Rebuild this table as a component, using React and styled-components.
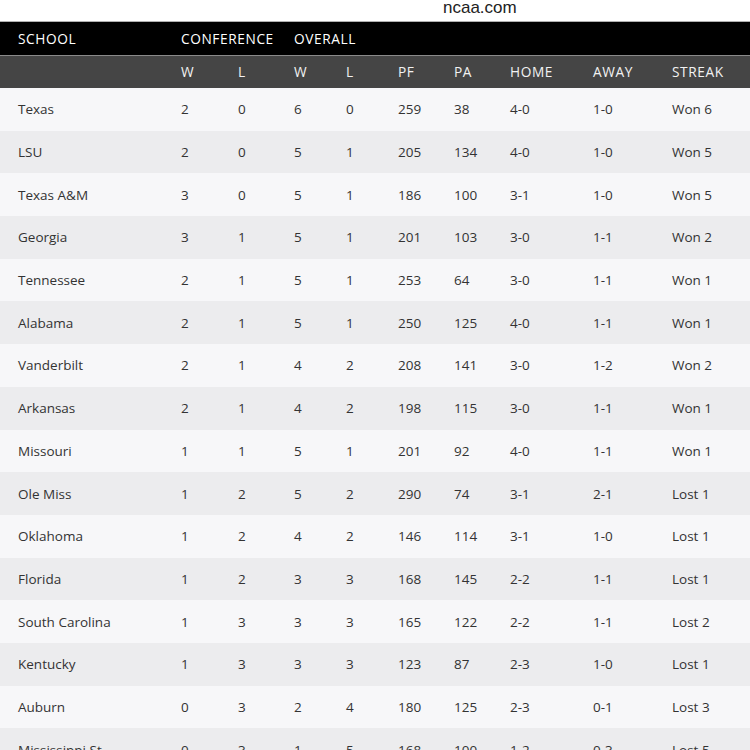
import styled, { createGlobalStyle } from "styled-components";

const GlobalStyle = createGlobalStyle`
  body {
    margin: 0;
    background: #ffffff;
    font-family: "Open Sans", "DejaVu Sans", sans-serif;
  }
`;

const COLS = "181px 57px 56px 52px 52px 56px 56px 83px 79px 1fr";

const Page = styled.div`
  width: 750px;
  height: 750px;
  overflow: hidden;
`;

const Source = styled.div`
  height: 22px;
  box-sizing: border-box;
  padding-left: 443px;
  font-family: "Liberation Sans", Arial, sans-serif;
  font-size: 17px;
  line-height: 16px;
  color: #222;
  border-bottom: 1px solid #b0b0b0;
`;

const HeadRow = styled.div`
  display: grid;
  grid-template-columns: ${COLS};
  align-items: center;
  height: ${p => p.$h}px;
  padding-bottom: 1px;
  background: ${p => p.$bg};
  color: ${p => p.$fg};
  font-size: 13.7px;
  letter-spacing: 0.6px;
  text-transform: uppercase;
  border-bottom: ${p => p.$line ? "1px solid #8a8a8a" : "none"};
  box-sizing: border-box;
`;

const HeadCell = styled.div`
  padding-left: ${p => p.$first ? "18px" : "0"};
  grid-column: ${p => p.$span || "auto"};
  white-space: nowrap;
`;

const Row = styled.div`
  display: grid;
  grid-template-columns: ${COLS};
  align-items: center;
  height: 42.7px;
  background: ${p => p.$alt ? "#ececee" : "#f7f7f9"};
  color: #333;
  font-size: 13.5px;
`;

const Cell = styled.div`
  padding-left: ${p => p.$first ? "18px" : "0"};
  white-space: nowrap;
`;

const teams = [
  ["Texas", 2, 0, 6, 0, 259, 38, "4-0", "1-0", "Won 6"],
  ["LSU", 2, 0, 5, 1, 205, 134, "4-0", "1-0", "Won 5"],
  ["Texas A&M", 3, 0, 5, 1, 186, 100, "3-1", "1-0", "Won 5"],
  ["Georgia", 3, 1, 5, 1, 201, 103, "3-0", "1-1", "Won 2"],
  ["Tennessee", 2, 1, 5, 1, 253, 64, "3-0", "1-1", "Won 1"],
  ["Alabama", 2, 1, 5, 1, 250, 125, "4-0", "1-1", "Won 1"],
  ["Vanderbilt", 2, 1, 4, 2, 208, 141, "3-0", "1-2", "Won 2"],
  ["Arkansas", 2, 1, 4, 2, 198, 115, "3-0", "1-1", "Won 1"],
  ["Missouri", 1, 1, 5, 1, 201, 92, "4-0", "1-1", "Won 1"],
  ["Ole Miss", 1, 2, 5, 2, 290, 74, "3-1", "2-1", "Lost 1"],
  ["Oklahoma", 1, 2, 4, 2, 146, 114, "3-1", "1-0", "Lost 1"],
  ["Florida", 1, 2, 3, 3, 168, 145, "2-2", "1-1", "Lost 1"],
  ["South Carolina", 1, 3, 3, 3, 165, 122, "2-2", "1-1", "Lost 2"],
  ["Kentucky", 1, 3, 3, 3, 123, 87, "2-3", "1-0", "Lost 1"],
  ["Auburn", 0, 3, 2, 4, 180, 125, "2-3", "0-1", "Lost 3"],
  ["Mississippi St", 0, 3, 1, 5, 168, 100, "1-2", "0-3", "Lost 5"],
];

const sub = ["", "W", "L", "W", "L", "PF", "PA", "Home", "Away", "Streak"];

export default function App() {
  return (
    <Page>
      <GlobalStyle />
      <Source>ncaa.com</Source>
      <HeadRow $h={34} $bg="#000" $fg="#fff" $line>
        <HeadCell $first>School</HeadCell>
        <HeadCell $span="span 2">Conference</HeadCell>
        <HeadCell $span="span 7">Overall</HeadCell>
      </HeadRow>
      <HeadRow $h={32} $bg="#454545" $fg="#f2f2f2">
        {sub.map((s, i) => (
          <HeadCell key={i} $first={i === 0}>{s}</HeadCell>
        ))}
      </HeadRow>
      {teams.map((t, i) => (
        <Row key={t[0]} $alt={i % 2 === 1}>
          {t.map((v, j) => (
            <Cell key={j} $first={j === 0}>{v}</Cell>
          ))}
        </Row>
      ))}
    </Page>
  );
}
